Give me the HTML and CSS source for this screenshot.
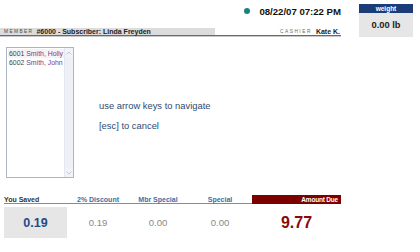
FILE: index.html
```html
<!DOCTYPE html>
<html>
<head>
<meta charset="utf-8">
<link rel="stylesheet" href="styles.css">
</head>
<body>
<div class="top">
  <div class="topmain">
    <div class="daterow">
      <span class="dot"></span>
      <span class="date">08/22/07 07:22 PM</span>
    </div>
    <div class="memberrow">
      <div class="memberbar"><span class="tiny">MEMBER</span><span class="bold">#6000 - Subscriber: Linda Freyden</span></div>
      <div class="cashier"><span class="tiny">CASHIER</span><span class="bold">Kate K.</span></div>
    </div>
  </div>
  <div class="weight">
    <div class="weighthead">weight</div>
    <div class="weightval">0.00 lb</div>
  </div>
</div>
<div class="middle">
  <div class="listbox">
    <div class="items">
      <div class="item sel"><span class="num">6001</span> <span class="name">Smith, Holly</span></div>
      <div class="item"><span class="num">6002</span> <span class="name">Smith, John</span></div>
    </div>
    <div class="scroll">
      <div class="sbtn"><svg width="6" height="4" viewBox="0 0 6 4"><path d="M0.5 3.5 L3 1 L5.5 3.5" fill="none" stroke="#c4c8d0" stroke-width="1"/></svg></div>
      <div class="track"></div>
      <div class="sbtn"><svg width="6" height="4" viewBox="0 0 6 4"><path d="M0.5 0.5 L3 3 L5.5 0.5" fill="none" stroke="#c4c8d0" stroke-width="1"/></svg></div>
    </div>
  </div>
  <div class="hints">
    <div class="hint">use arrow keys to navigate</div>
    <div class="hint">[esc] to cancel</div>
  </div>
</div>
<div class="totals">
  <div class="lbl first">You Saved</div>
  <div class="lbl blue">2% Discount</div>
  <div class="lbl blue">Mbr Special</div>
  <div class="lbl blue">Special</div>
  <div class="lbl due">Amount Due</div>
  <div class="val saved">0.19</div>
  <div class="val">0.19</div>
  <div class="val">0.00</div>
  <div class="val">0.00</div>
  <div class="val total">9.77</div>
</div>
</body>
</html>
```
FILE: styles.css
```css
html, body {
  margin: 0;
  padding: 0;
  background: #fff;
  font-family: "Liberation Sans", Arial, sans-serif;
  width: 420px;
  height: 252px;
  overflow: hidden;
}
.top {
  display: flex;
  align-items: flex-start;
}
.topmain {
  width: 341px;
}
.daterow {
  height: 28px;
  display: flex;
  align-items: center;
  justify-content: flex-end;
  box-sizing: border-box;
  padding-bottom: 6px;
}
.dot {
  width: 6px;
  height: 6px;
  border-radius: 50%;
  background: #16847f;
  margin-right: 9px;
}
.date {
  font-weight: bold;
  font-size: 9.6px;
  color: #111;
}
.memberrow {
  display: flex;
  justify-content: space-between;
  align-items: center;
  height: 7px;
  border-bottom: 1px solid #6a6a6a;
  box-shadow: 0 1px 0 #c8c8c8;
}
.memberbar {
  background: #dcdcdc;
  width: 215px;
  height: 7px;
  display: flex;
  align-items: center;
  padding-left: 4px;
  box-sizing: border-box;
}
.tiny {
  font-size: 4.8px;
  letter-spacing: 1.4px;
  color: #4a4a4a;
  margin-right: 3px;
}
.bold {
  font-weight: bold;
  font-size: 7px;
  color: #222;
}
.cashier {
  display: flex;
  align-items: center;
  padding-right: 1px;
}
.cashier .tiny {
  letter-spacing: 1.5px;
  margin-right: 4px;
  color: #666;
}
.weight {
  margin-left: 18px;
  margin-top: 4px;
  width: 54px;
  height: 33px;
  background: #e6e6e6;
  display: flex;
  flex-direction: column;
}
.weighthead {
  background: #1c3c78;
  color: #fff;
  font-size: 6.5px;
  font-weight: bold;
  text-align: center;
  height: 9px;
  line-height: 9px;
}
.weightval {
  flex: 1;
  display: flex;
  align-items: center;
  justify-content: center;
  font-weight: bold;
  font-size: 9.3px;
  color: #222;
}
.middle {
  display: flex;
  align-items: flex-start;
  height: 157px;
}
.listbox {
  margin-top: 10px;
  margin-left: 6px;
  width: 68px;
  height: 131px;
  border: 1px solid #aab6c8;
  box-sizing: border-box;
  display: flex;
  background: #fff;
}
.items {
  flex: 1;
  padding-top: 1px;
  padding-left: 1px;
}
.item {
  font-size: 6.9px;
  line-height: 9px;
  height: 9px;
  white-space: nowrap;
  padding-left: 1px;
}
.item.sel {
  background: #f4f4f6;
}
.num {
  color: #444;
}
.name {
  color: #7a3c86;
}
.scroll {
  width: 8px;
  background: #eef0f6;
  border-left: 1px solid #e2e6ee;
  display: flex;
  flex-direction: column;
}
.sbtn {
  height: 9px;
  display: flex;
  align-items: center;
  justify-content: center;
  background: #f2f3f6;
}
.track {
  flex: 1;
}
.hints {
  padding-left: 25px;
  padding-top: 63px;
  display: flex;
  flex-direction: column;
  gap: 8px;
}
.hint {
  font-size: 9.4px;
  line-height: 12px;
  color: #2e4a72;
}
.totals {
  display: grid;
  grid-template-columns: 64px 60px 60px 64px 89px;
  grid-template-rows: 9px 31px;
  row-gap: 3px;
  padding-left: 4px;
  margin-top: 1px;
}
.lbl {
  font-weight: bold;
  font-size: 7px;
  line-height: 9px;
  text-align: center;
  border-bottom: 1px solid #8a8a8a;
}
.lbl.first {
  text-align: left;
  color: #333;
}
.lbl.blue {
  color: #3a6ea8;
}
.lbl.due {
  background: #7c0000;
  color: #fff;
  text-align: right;
  font-size: 6.5px;
  padding-right: 3px;
  border-bottom: none;
  height: 9px;
  letter-spacing: -0.2px;
}
.val {
  display: flex;
  align-items: center;
  justify-content: center;
  font-size: 9.6px;
  color: #8a8a8a;
}
.val.saved {
  background: #e6e6e6;
  font-weight: bold;
  font-size: 12.5px;
  color: #1f4c8a;
  width: 63px;
}
.val.total {
  font-weight: bold;
  font-size: 16px;
  color: #8a0a0a;
}
```
